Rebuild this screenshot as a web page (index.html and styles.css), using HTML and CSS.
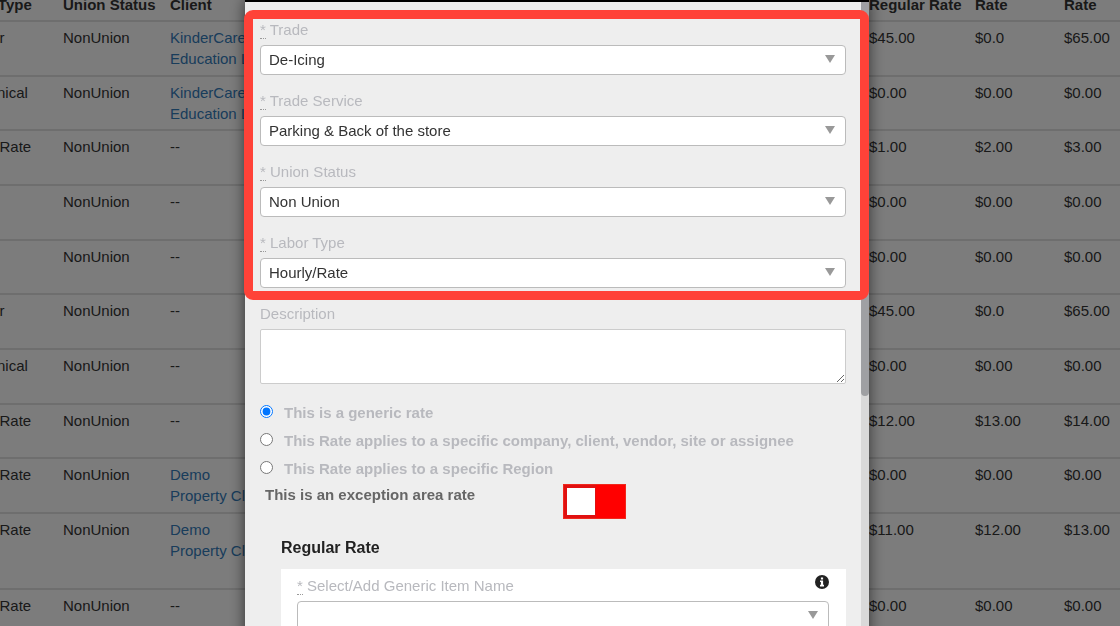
FILE: index.html
```html
<!DOCTYPE html>
<html lang="en">
<head>
<meta charset="UTF-8">
<meta name="viewport" content="width=device-width, initial-scale=1.0">
<title>Labor Rates</title>
<link rel="stylesheet" href="styles.css">
</head>
<body>

<div class="page">
  <table class="rates">
    <colgroup>
      <col class="col-type"><col class="col-union"><col class="col-client">
      <col class="col-regular"><col class="col-rate"><col class="col-rate-last">
    </colgroup>
    <thead>
      <tr><th>Labor Type</th><th>Union Status</th><th>Client</th><th>Regular Rate</th><th>Rate</th><th>Rate</th></tr>
    </thead>
    <tbody>
      <tr><td>Regular</td><td>NonUnion</td><td><a href="#">KinderCare<br>Education LLC</a></td><td>$45.00</td><td>$0.0</td><td>$65.00</td></tr>
      <tr><td>Mechanical</td><td>NonUnion</td><td><a href="#">KinderCare<br>Education LLC</a></td><td>$0.00</td><td>$0.00</td><td>$0.00</td></tr>
      <tr><td>Hourly/Rate</td><td>NonUnion</td><td>--</td><td>$1.00</td><td>$2.00</td><td>$3.00</td></tr>
      <tr><td></td><td>NonUnion</td><td>--</td><td>$0.00</td><td>$0.00</td><td>$0.00</td></tr>
      <tr><td></td><td>NonUnion</td><td>--</td><td>$0.00</td><td>$0.00</td><td>$0.00</td></tr>
      <tr><td>Regular</td><td>NonUnion</td><td>--</td><td>$45.00</td><td>$0.0</td><td>$65.00</td></tr>
      <tr><td>Mechanical</td><td>NonUnion</td><td>--</td><td>$0.00</td><td>$0.00</td><td>$0.00</td></tr>
      <tr><td>Hourly/Rate</td><td>NonUnion</td><td>--</td><td>$12.00</td><td>$13.00</td><td>$14.00</td></tr>
      <tr><td>Hourly/Rate</td><td>NonUnion</td><td><a href="#">Demo<br>Property Client</a></td><td>$0.00</td><td>$0.00</td><td>$0.00</td></tr>
      <tr class="tall"><td>Hourly/Rate</td><td>NonUnion</td><td><a href="#">Demo<br>Property Client</a></td><td>$11.00</td><td>$12.00</td><td>$13.00</td></tr>
      <tr><td>Hourly/Rate</td><td>NonUnion</td><td>--</td><td>$0.00</td><td>$0.00</td><td>$0.00</td></tr>
    </tbody>
  </table>
</div>

<div class="overlay">
  <div class="dialog" role="dialog" aria-label="Add rate">
    <form class="dialog-body">

      <div class="highlight">
        <div class="field">
          <label for="trade"><abbr title="required">*</abbr> Trade</label>
          <div class="select"><select id="trade"><option>De-Icing</option></select></div>
        </div>
        <div class="field">
          <label for="service"><abbr title="required">*</abbr> Trade Service</label>
          <div class="select"><select id="service"><option>Parking &amp; Back of the store</option></select></div>
        </div>
        <div class="field">
          <label for="union"><abbr title="required">*</abbr> Union Status</label>
          <div class="select"><select id="union"><option>Non Union</option></select></div>
        </div>
        <div class="field">
          <label for="labor"><abbr title="required">*</abbr> Labor Type</label>
          <div class="select"><select id="labor"><option>Hourly/Rate</option></select></div>
        </div>
      </div>

      <div class="field">
        <label for="description">Description</label>
        <textarea id="description"></textarea>
      </div>

      <div class="radios">
        <label><input type="radio" name="scope" checked><span>This is a generic rate</span></label>
        <label><input type="radio" name="scope"><span>This Rate applies to a specific company, client, vendor, site or assignee</span></label>
        <label><input type="radio" name="scope"><span>This Rate applies to a specific Region</span></label>
      </div>

      <div class="exception">
        <label for="exception">This is an exception area rate</label>
        <input type="checkbox" id="exception" class="toggle">
      </div>

      <section class="rate-group">
        <h2>Regular Rate</h2>
        <div class="panel">
          <div class="panel-head">
            <label for="item"><abbr title="required">*</abbr> Select/Add Generic Item Name</label>
            <svg class="info" viewBox="0 0 14 14" role="img" aria-label="Info">
              <circle cx="7" cy="7" r="7" fill="#222"/>
              <path fill="#fff" d="M5.9 2.4h2.2v2H5.9zM5 5.4h3.1v4.4H9v1.6H5V9.8h.9V7H5z"/>
            </svg>
          </div>
          <div class="select"><select id="item"><option></option></select></div>
        </div>
      </section>

    </form>
    <div class="scrollbar"><div class="thumb"></div></div>
  </div>
</div>

</body>
</html>
```

FILE: styles.css
```css
* {
  box-sizing: border-box;
}
html, body {
  height: 100%;
}
body {
  margin: 0;
  overflow: hidden;
  background-color: #f9f9f9;
  color: #333;
  font-family: "Liberation Sans", Arial, sans-serif;
  font-size: 15px;
  line-height: 21px;
}

/* table behind the dialog */
.page {
  height: 100%;
  overflow: hidden;
}
.rates {
  width: calc(100% + 48px);
  margin: -10px 0 0 -48px;
  table-layout: fixed;
  border-spacing: 0;
}
.col-type { width: 111px; }
.col-union { width: 107px; }
.col-regular { width: 106px; }
.col-rate { width: 89px; }
.col-rate-last { width: 56px; }
.rates th {
  padding: 4px 0 5px;
  text-align: left;
  white-space: nowrap;
}
.rates td {
  height: 55px;
  padding: 5px 0 0;
  border-top: 2px solid #ddd;
  vertical-align: top;
}
.rates tbody tr:nth-child(3n+2) td {
  height: 54px;
}
.rates .tall td {
  height: 76px;
}
.rates a {
  color: #337ab7;
  text-decoration: none;
}

/* dialog */
.overlay {
  position: fixed;
  inset: 0;
  display: flex;
  justify-content: center;
  align-items: flex-start;
  padding-right: 6px;
  overflow: hidden;
  background-color: rgba(0, 0, 0, 0.5);
}
.dialog {
  display: flex;
  width: 624px;
  max-width: 100%;
  min-height: 100%;
  border-top: 2px solid #000;
  background-color: #eee;
  box-shadow: 0 0 14px rgba(0, 0, 0, 0.6);
}
.dialog-body {
  flex: 1;
  padding: 17px 15px 24px;
}
.scrollbar {
  width: 8px;
  background-color: #d9d9d9;
}
.thumb {
  height: 63vh;
  border-radius: 0 0 4px 4px;
  background-color: #9fa0a3;
}
.highlight {
  position: relative;
}
.highlight::after {
  content: "";
  position: absolute;
  inset: -9px -23px 3px -16px;
  border: 9px solid #ff4238;
  border-radius: 9px;
  pointer-events: none;
}

.field {
  padding-bottom: 15px;
}
label {
  color: #b8b9be;
}
.field label {
  display: block;
  margin-bottom: 5px;
}
abbr {
  border-bottom: 1px dotted #999;
  text-decoration: none;
}
.select {
  position: relative;
}
.select::after {
  content: "";
  position: absolute;
  top: 10px;
  right: 11px;
  border: 5px solid transparent;
  border-top: 8px solid #999;
  border-bottom: 0;
  pointer-events: none;
}
select {
  display: block;
  width: 100%;
  height: 30px;
  padding: 0 28px 2px 8px;
  border: 1px solid #bbb;
  border-radius: 4px;
  background-color: #fff;
  color: #333;
  font: inherit;
  appearance: none;
}
textarea {
  display: block;
  width: 100%;
  height: 55px;
  border: 1px solid #ccc;
  border-radius: 2px;
  background-color: #fff;
  font: inherit;
}

.radios label {
  display: flex;
  gap: 11px;
  height: 28px;
  font-weight: bold;
  line-height: 28px;
}
.radios input {
  width: 13px;
  height: 13px;
  margin: 6px 0 0;
}

.exception {
  display: flex;
  padding: 1px 0 0 5px;
}
.exception label {
  width: 298px;
  color: #666;
  font-weight: bold;
}
.toggle {
  width: 63px;
  height: 35px;
  margin: 0;
  padding: 3px;
  border: 1px solid #f0281c;
  background: linear-gradient(to right, #e01010 32px, #f00 32px);
  appearance: none;
}
.toggle::before {
  content: "";
  display: block;
  width: 28px;
  height: 27px;
  background-color: #fff;
}

.rate-group {
  padding: 18px 0 0 21px;
}
.rate-group h2 {
  margin: 0 0 11px;
  color: #222;
  font-size: 16px;
  line-height: 21px;
}
.panel {
  padding: 6px 17px 16px 16px;
  background-color: #fff;
}
.panel-head {
  display: flex;
  justify-content: space-between;
  margin-bottom: 5px;
}
.info {
  width: 14px;
  height: 14px;
}
```
